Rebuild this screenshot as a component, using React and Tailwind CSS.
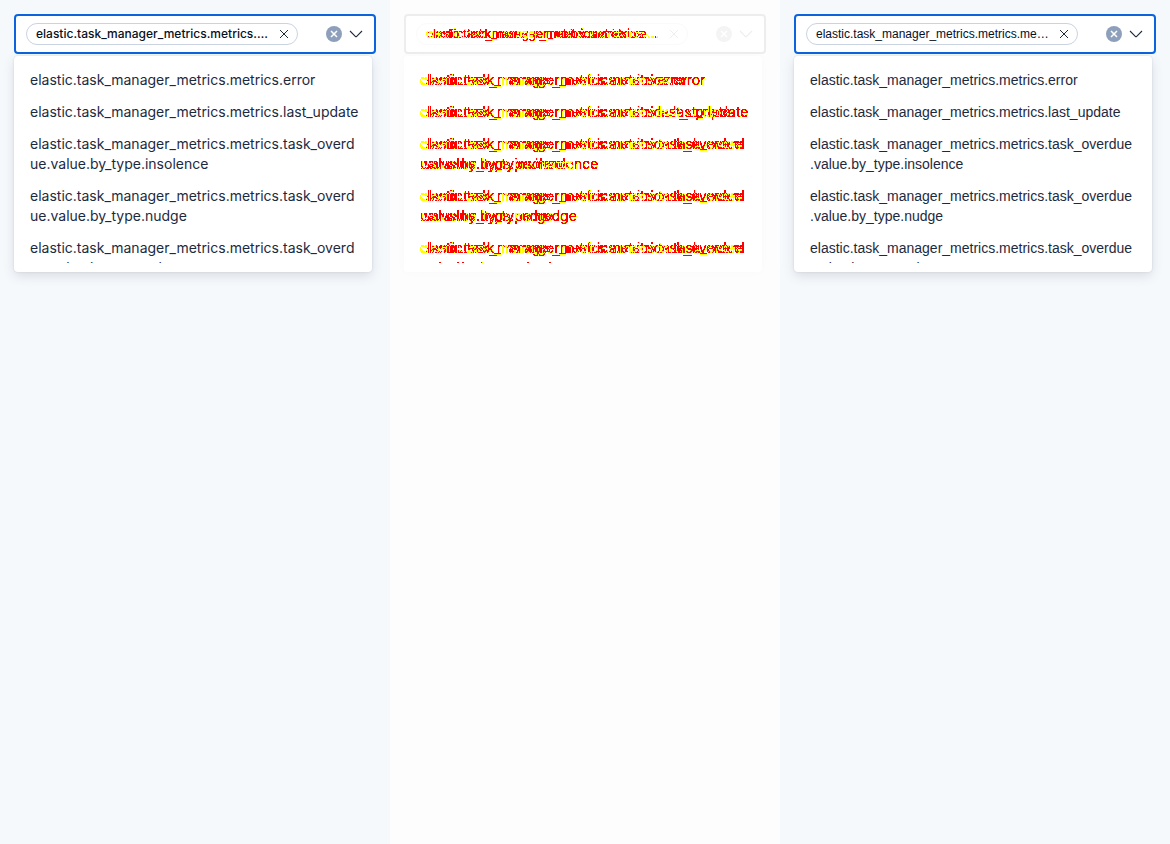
import { useId } from 'react';
import clsx from 'clsx';

const PREFIX = 'elastic.task_manager_metrics.metrics.';

const options = [
    `${PREFIX}error`,
    `${PREFIX}last_update`,
    `${PREFIX}task_overdue.value.by_type.insolence`,
    `${PREFIX}task_overdue.value.by_type.nudge`,
    `${PREFIX}task_overdue.value.by_type.rule_segment`
];

const selected = `${PREFIX}metrics.task_overdue`;

const INTER = "font-['Inter',sans-serif]";
const ARIAL = "font-['Liberation_Sans',sans-serif]";

// Two renderings of the same text; whatever differs is painted red, soft edges yellow
function DiffText({ children, className, arialClass }) {
    return (
        <span className="grid isolate [filter:url(#diff-colors)]">
            <span className={clsx(className, INTER, 'col-start-1 row-start-1 bg-white text-black')}>
                {children}
            </span>
            <span
                aria-hidden="true"
                className={clsx(className, ARIAL, arialClass, 'col-start-1 row-start-1 bg-white text-black mix-blend-difference')}
            >
                {children}
            </span>
        </span>
    );
}

function DiffFilter() {
    return (
        <svg width="0" height="0" className="absolute" aria-hidden="true">
            <filter id="diff-colors" x="0" y="0" width="100%" height="100%" colorInterpolationFilters="sRGB">
                <feColorMatrix values="0 0 0 0 1  0 1 0 0 0  0 0 0 0 0  1 0 0 0 0" />
                <feComponentTransfer>
                    <feFuncG type="discrete" tableValues="1 1 1 0 0 0 0 0 0 0" />
                    <feFuncA type="discrete" tableValues="0 1 1 1 1 1 1 1 1 1 1 1 1 1 1 1 1 1 1 1 1 1 1 1 1" />
                </feComponentTransfer>
            </filter>
        </svg>
    );
}

function CrossIcon({ className }) {
    return (
        <svg className={className} viewBox="0 0 12 12" fill="none" stroke="currentColor" aria-hidden="true">
            <path d="M2 2l8 8M10 2l-8 8" />
        </svg>
    );
}

function ComboBox({ font, optionPadding = 'px-4', diff }) {
    const id = useId();

    return (
        <div className={clsx('min-w-0 p-3.5', font, diff ? 'bg-[#fdfdfd]' : 'bg-[#f6f9fc]')}>
            <div
                className={clsx(
                    'flex h-10 items-center rounded-sm border-2 bg-white px-2.5',
                    diff ? 'border-[#ededed]' : 'border-[#0b64dd]'
                )}
            >
                <span
                    className={clsx(
                        'flex h-[22px] w-[272px] min-w-0 items-center gap-2 rounded-full border pr-[7px] pl-[9px] text-xs font-medium',
                        diff ? 'border-[#fafafa]' : 'border-[#cad3e2] text-[#07101f]'
                    )}
                >
                    <span className="min-w-0 flex-1">
                        {diff ? (
                            <DiffText className="truncate">{selected}</DiffText>
                        ) : (
                            <span className="block truncate">{selected}</span>
                        )}
                    </span>
                    <button aria-label="Remove selection" className={diff ? 'text-[#ededed]' : 'text-[#1d2a3e]'}>
                        <CrossIcon className="size-3" />
                    </button>
                </span>
                <input id={id} aria-label="Field" className="w-0 min-w-0 flex-1 outline-none" />
                <button
                    aria-label="Clear input"
                    className={clsx(
                        'flex size-4 shrink-0 items-center justify-center rounded-full text-white',
                        diff ? 'bg-[#f4f4f4]' : 'bg-[#8e9fbc]'
                    )}
                >
                    <svg className="size-4" viewBox="0 0 16 16" fill="none" stroke="currentColor" strokeWidth="1.5" aria-hidden="true">
                        <path d="M5 5l6 6M11 5l-6 6" />
                    </svg>
                </button>
                <button aria-label="Toggle options" className={clsx('ml-1.5 shrink-0', diff ? 'text-[#ededed]' : 'text-[#1d2a3e]')}>
                    <svg className="size-4" viewBox="0 0 16 16" fill="none" stroke="currentColor" strokeWidth="1.1" aria-hidden="true">
                        <path d="M2 5l5.3 5.3a1 1 0 0 0 1.4 0L14 5" />
                    </svg>
                </button>
            </div>
            <div
                className={clsx(
                    'mt-0.5 mr-1 rounded-sm bg-white pt-2 pb-[9px]',
                    diff
                        ? 'shadow-[0_0_12px_rgba(0,0,0,0.02)]'
                        : 'shadow-[0_0_2px_rgba(43,57,79,0.16),0_4px_12px_rgba(43,57,79,0.14)]'
                )}
            >
                <ul role="listbox" aria-label="Fields" className="h-[199px] overflow-hidden text-sm/5 text-[#1d2a3e]">
                    {options.map((option) => (
                        <li
                            key={option}
                            role="option"
                            aria-selected="false"
                            className={clsx('py-1.5 [overflow-wrap:anywhere]', optionPadding)}
                        >
                            {diff ? <DiffText arialClass="pr-1">{option}</DiffText> : option}
                        </li>
                    ))}
                </ul>
            </div>
        </div>
    );
}

export default function App() {
    return (
        <div className="grid min-h-screen grid-cols-3">
            <DiffFilter />
            <ComboBox font={INTER} optionPadding="pr-3 pl-4" />
            <ComboBox font={ARIAL} optionPadding="pr-3 pl-4" diff />
            <ComboBox font={ARIAL} />
        </div>
    );
}
